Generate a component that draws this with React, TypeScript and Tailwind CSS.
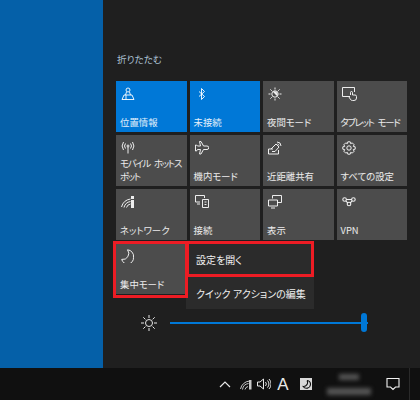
import React from 'react';

const S = { fill: 'none', stroke: 'currentColor', strokeWidth: 1 };

const icons: Record<string, React.ReactNode> = {
  location: (
    <svg width="14" height="14" viewBox="0 0 14 14" {...S}>
      <circle cx="7" cy="3" r="2" />
      <path d="M5.5 5 L4.5 8 M8.5 5 L9.5 8 M3 8 H11 M3 8 L1 12.5 H13 L11 8 M5 8 V12.5" />
    </svg>
  ),
  bluetooth: (
    <svg width="14" height="14" viewBox="0 0 14 14" {...S}>
      <path d="M4 4.5 L9.5 9.5 L6.5 12.5 V1.5 L9.5 4.5 L4 9.5" />
    </svg>
  ),
  night: (
    <svg width="14" height="14" viewBox="0 0 14 14" {...S}>
      <circle cx="7" cy="7" r="3.2" />
      <path d="M7 7 m-2.2 -2.2 a3.2 3.2 0 0 1 4.4 4.4 z" fill="currentColor" stroke="none" />
      <path d="M7 .5 V2.5 M7 11.5 V13.5 M.5 7 H2.5 M11.5 7 H13.5 M2.4 2.4 L3.8 3.8 M10.2 10.2 L11.6 11.6 M11.6 2.4 L10.2 3.8 M3.8 10.2 L2.4 11.6" />
    </svg>
  ),
  tablet: (
    <svg width="16" height="14" viewBox="0 0 16 14" {...S}>
      <path d="M8 9.5 H.5 V.5 H12.5 V5" />
      <path d="M8.5 8 V5.5 a1 1 0 0 1 2 0 V8 H13 a1.5 1.5 0 0 1 1.5 1.5 V11 a2.5 2.5 0 0 1 -2.5 2.5 H10.5 a2.5 2.5 0 0 1 -2.2 -1.3 L7 10" />
    </svg>
  ),
  hotspot: (
    <svg width="14" height="14" viewBox="0 0 14 14" {...S}>
      <circle cx="7" cy="5" r="1" />
      <path d="M7 6 V12.5 M4.5 2.5 a4 4 0 0 0 0 5 M9.5 2.5 a4 4 0 0 1 0 5 M2.5 1 a7 7 0 0 0 0 8 M11.5 1 a7 7 0 0 1 0 8" />
    </svg>
  ),
  plane: (
    <svg width="14" height="14" viewBox="0 0 14 14" {...S}>
      <path d="M4.5 .5 H6 L8.5 5 H12 a1.5 1.5 0 0 1 0 3.5 H8.5 L6 13 H4.5 L5.5 8.5 H2.5 L1.5 10 H.5 V4 H1.5 L2.5 5 H5.5 Z" />
    </svg>
  ),
  share: (
    <svg width="14" height="14" viewBox="0 0 14 14" {...S}>
      <path d="M.5 8 H5 M.5 8 V13 H10.5 V9 M3 8 L8 3 L11 6 L7 10.5 H4" />
      <path d="M9 1 a4 4 0 0 1 4 4 M9.5 3 a2 2 0 0 1 1.5 1.5" />
    </svg>
  ),
  gear: (
    <svg width="14" height="14" viewBox="0 0 14 14" {...S}>
      <circle cx="7" cy="7" r="2.2" />
      <path d="M5.8 .8 H8.2 L8.6 2.6 L10.3 1.9 L12.1 3.7 L11.3 5.4 L13.2 5.8 V8.2 L11.3 8.6 L12.1 10.3 L10.3 12.1 L8.6 11.4 L8.2 13.2 H5.8 L5.4 11.4 L3.7 12.1 L1.9 10.3 L2.7 8.6 L.8 8.2 V5.8 L2.7 5.4 L1.9 3.7 L3.7 1.9 L5.4 2.6 Z" />
    </svg>
  ),
  network: (
    <svg width="14" height="14" viewBox="0 0 14 14" {...S}>
      <path d="M.5 12 a11 11 0 0 1 9 -8 M3 12.5 a8 8 0 0 1 6.5 -6 M5.5 12.5 a5 5 0 0 1 4 -3.5" />
      <path d="M10 1 H13 V4 H10 Z M10 5 H13 V13 H10 Z" fill="currentColor" stroke="none" />
    </svg>
  ),
  connect: (
    <svg width="14" height="14" viewBox="0 0 14 14" {...S}>
      <path d="M.5 .5 H9.5 V3 M.5 .5 V7 H5" />
      <path d="M7.5 4.5 H13.5 V12.5 H7.5 Z M9.5 7 H11.5 M9.5 9.5 H11.5" />
      <path d="M2 9 H5" />
    </svg>
  ),
  display: (
    <svg width="14" height="14" viewBox="0 0 14 14" {...S}>
      <path d="M4.5 3.5 V.5 H13.5 V7.5 H9.5" />
      <path d="M.5 5 H9.5 V11 H.5 Z M3 13 H7" />
    </svg>
  ),
  vpn: (
    <svg width="14" height="14" viewBox="0 0 14 14" {...S} strokeWidth="1.1">
      <circle cx="2.6" cy="4.5" r="1.8" />
      <circle cx="7" cy="9" r="1.8" />
      <circle cx="11.4" cy="4.5" r="1.8" />
      <path d="M4.4 4.5 H9.6 M3.8 6 L5.8 7.8 M10.2 6 L8.2 7.8" />
    </svg>
  ),
  moon: (
    <svg width="14" height="14" viewBox="0 0 14 14" {...S}>
      <path d="M6.5 .8 a6 6 0 0 1 -5.8 9.6 a6 6 0 0 0 11.8 -2 a6.5 6.5 0 0 0 -6 -7.6 z" />
    </svg>
  ),
};

const tiles = [
  { icon: 'location', label: '位置情報', on: true },
  { icon: 'bluetooth', label: '未接続', on: true },
  { icon: 'night', label: '夜間モード' },
  { icon: 'tablet', label: 'タブレット モード', tight: true },
  { icon: 'hotspot', label: 'モバイル ホットス\nポット', tight: true },
  { icon: 'plane', label: '機内モード' },
  { icon: 'share', label: '近距離共有' },
  { icon: 'gear', label: 'すべての設定' },
  { icon: 'network', label: 'ネットワーク' },
  { icon: 'connect', label: '接続' },
  { icon: 'display', label: '表示' },
  { icon: 'vpn', label: 'VPN' },
  { icon: 'moon', label: '集中モード' },
];

const Tile: React.FC<{ icon: string; label: string; on?: boolean; tight?: boolean }> = ({ icon, label, on, tight }) => (
  <div className={`h-[51px] flex flex-col justify-between pl-1 pt-1.5 pb-[3px] text-white/90 ${on ? 'bg-[#0078d7]' : 'bg-[#4c4c4c]'}`}>
    <div className="h-[14px] pl-px">{icons[icon]}</div>
    <div className={`text-[9.4px] leading-[13px] whitespace-pre ${tight ? 'tracking-[-1.2px] [word-spacing:3px]' : ''}`}>{label}</div>
  </div>
);

export default function App() {
  return (
    <div className="relative w-[420px] h-[400px] flex flex-col overflow-hidden [font-feature-settings:'palt'] font-['Noto_Sans_CJK_JP','Noto_Sans',sans-serif]">
      <div className="flex flex-1 min-h-0">
        <div className="w-[103px] bg-[#0560a8]" />
        <div className="flex-1 bg-[#1f1f1f] pt-[53px] pl-[13px]">
          <div className="text-[9.6px] leading-[13px] text-[#a9bfd0] ml-px">折りたたむ</div>
          <div className="mt-[15px] w-[291px] grid grid-cols-4 gap-x-[3px] gap-y-[3px]">
            {tiles.map((t) => (
              <Tile key={t.icon} {...t} />
            ))}
          </div>
          <div className="mt-[21px] ml-[25px] flex items-center gap-[13px]">
            <svg width="16" height="16" viewBox="0 0 16 16" fill="none" stroke="#e8e8e8" strokeWidth="1">
              <circle cx="8" cy="8" r="3.5" />
              <path d="M8 0 V3 M8 13 V16 M0 8 H3 M13 8 H16 M2.3 2.3 L4.4 4.4 M11.6 11.6 L13.7 13.7 M13.7 2.3 L11.6 4.4 M4.4 11.6 L2.3 13.7" />
            </svg>
            <div className="relative w-[198px] h-[2px] bg-[#0078d7]">
              <div className="absolute right-[1px] top-[-9px] w-[6px] h-[19px] rounded-full bg-[#0078d7]" />
            </div>
          </div>
        </div>
      </div>

      {/* taskbar */}
      <div className="h-[32px] bg-[#101010] flex items-center text-[#e8e8e8]">
        <div className="flex-1" />
        <svg width="12" height="8" viewBox="0 0 12 8" fill="none" stroke="currentColor" strokeWidth="1.2">
          <path d="M1 7 L6 2 L11 7" />
        </svg>
        <svg className="ml-[9px] text-[#c8c8c8]" width="12" height="12" viewBox="0 0 12 12" fill="none" stroke="currentColor" strokeWidth="1">
          <path d="M.5 11 a10 10 0 0 1 9 -8 M2.5 11.5 a7 7 0 0 1 6 -6 M5 11.5 a4 4 0 0 1 3 -3" />
          <rect x="9" y="2" width="2.5" height="9.5" fill="currentColor" stroke="none" />
        </svg>
        <svg className="ml-[5px]" width="14" height="12" viewBox="0 0 14 12" fill="none" stroke="currentColor" strokeWidth="1">
          <path d="M.5 4 H3 L6.5 1 V11 L3 8 H.5 Z M8.5 4 a3 3 0 0 1 0 4 M10.5 2.5 a5 5 0 0 1 0 7 M12 1 a7 7 0 0 1 0 10" />
        </svg>
        <span className="ml-[5px] w-[14px] text-center text-[17px] leading-none font-['Liberation_Sans',sans-serif]">A</span>
        <div className="ml-[10px] w-[12px] h-[12px] bg-[#d8d8d8] flex items-center justify-center text-[#101010]">
          <svg width="9" height="9" viewBox="0 0 9 9" fill="none" stroke="currentColor" strokeWidth="1.1">
            <path d="M5 .5 a4 4 0 0 1 -3.8 6 a4 4 0 0 0 7.3 -2 a4 4 0 0 0 -3.5 -4" />
          </svg>
        </div>
        <div className="ml-[13px] w-[48px] flex flex-col items-center gap-[8px] blur-[2px]">
          <div className="w-[20px] h-[6px] bg-[#555]" />
          <div className="w-[44px] h-[7px] bg-[#555]" />
        </div>
        <div className="ml-[3px] w-[33px] h-full flex items-center justify-center">
          <svg width="14" height="14" viewBox="0 0 14 14" fill="none" stroke="#f2f2f2" strokeWidth="1.1">
            <path d="M1 1.5 H13 V10 H9.5 L7 12.5 L4.5 10 H1 Z" />
          </svg>
        </div>
        <div className="w-[11px] h-full border-l border-[#2a2a2a]" />
      </div>

      {/* context menu */}
      <div className="absolute left-[186px] top-[243px] w-[128px] h-[66px] bg-[#2b2b2b] text-[#f0f0f0] text-[10px] flex flex-col">
        <div className="h-[33px] flex items-center pl-[10px]">設定を開く</div>
        <div className="h-px mx-[9px] bg-[#8a8a8a]" />
        <div className="flex-1 flex items-center pl-[10px] whitespace-nowrap">クイック アクションの編集</div>
      </div>

      {/* red annotation frames */}
      <div className="absolute left-[113px] top-[241px] w-[75px] h-[57px] border-[3px] border-[#ed1c24]" />
      <div className="absolute left-[186px] top-[241px] w-[128px] h-[36px] border-[3px] border-[#ed1c24]" />
    </div>
  );
}
